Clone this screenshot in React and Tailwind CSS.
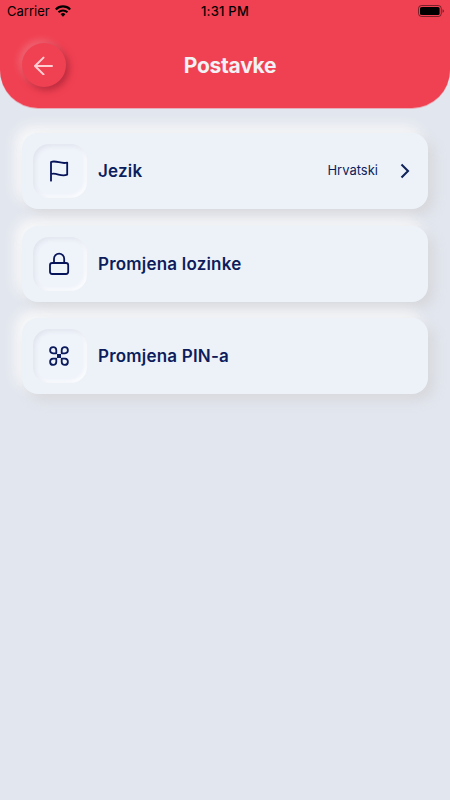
function StatusBar() {
  return (
    <div className="grid h-[23px] grid-cols-3 items-center pl-[7px] pr-[6px] text-[13px] leading-none text-black">
      <div className="flex items-center gap-[5px]">
        <span>Carrier</span>
        <svg className="-mt-px" width="16" height="12" viewBox="0 0 16 12" fill="black">
          <path d="M8 11.8 5.6 9.3a3.4 3.4 0 0 1 4.8 0z" />
          <path d="M3.5 7.3a6.4 6.4 0 0 1 9 0" fill="none" stroke="black" strokeWidth="2" />
          <path d="M.8 4.4a10.2 10.2 0 0 1 14.4 0" fill="none" stroke="black" strokeWidth="2.1" />
        </svg>
      </div>
      <span className="pr-px text-center font-medium tracking-[0.2px]">1:31 PM</span>
      <svg className="-mt-px justify-self-end" width="26" height="12" viewBox="0 0 26 12">
        <rect x="0.5" y="0.5" width="22.8" height="11" rx="3" fill="none" stroke="black" strokeOpacity="0.5" />
        <rect x="2" y="2" width="19.6" height="8" rx="1.6" fill="black" />
        <path d="M24.6 4.2c.8.3 1.2 1 1.2 1.8s-.4 1.5-1.2 1.8z" fill="black" fillOpacity="0.6" />
      </svg>
    </div>
  )
}

function Header({ title }) {
  return (
    <header className="h-[108px] rounded-b-[38px] bg-[#f04152] shadow-[0_1px_0_rgba(240,65,82,0.35)]">
      <StatusBar />
      <div className="grid grid-cols-[44px_1fr_34px] items-center px-[22px] pt-5">
        <button className="flex size-11 items-center justify-center rounded-full bg-[#f04152] shadow-[3px_3px_7px_rgba(130,20,40,0.5),-3px_-3px_7px_rgba(255,255,255,0.2)]">
          <svg width="20" height="20" viewBox="0 0 20 20" fill="none" stroke="#ffced3" strokeWidth="2" strokeLinecap="round" strokeLinejoin="round">
            <path d="M18 11H1M9.5 2.6 1 11l8.500 8.400" />
          </svg>
        </button>
        <h1 className="text-center text-[21px] font-bold leading-none tracking-[-0.25px] text-[#f3f1f4]">{title}</h1>
      </div>
    </header>
  )
}

function FlagIcon() {
  return (
    <svg width="24" height="24" viewBox="0 0 24 24" fill="none" stroke="#07145a" strokeWidth="1.8" strokeLinecap="round" strokeLinejoin="round">
      <path d="M4 21.700V3c5.500-2.200 10 2.600 16.200.6v12c-6.200 2.600-10.200-2.200-16.200-.6" />
    </svg>
  )
}

function LockIcon() {
  return (
    <svg width="24" height="24" viewBox="0 0 24 24" fill="none" stroke="#07145a" strokeWidth="1.8" strokeLinecap="round" strokeLinejoin="round">
      <rect x="3" y="11" width="18.200" height="11" rx="2.200" />
      <path d="M7 11V6.700a5.100 5.100 0 0 1 10.200 0V11" />
    </svg>
  )
}

function PinIcon() {
  return (
    <svg width="24" height="24" viewBox="0 0 24 24" fill="none" stroke="#0b1b5c" strokeWidth="1.8" strokeLinejoin="round">
      <path d="M9.300 9.300H6a3.100 3.100 0 1 1 3.300-3.300z" />
      <path d="M14.700 9.300H18a3.100 3.100 0 1 0-3.300-3.300z" />
      <path d="M9.300 14.700H6a3.100 3.100 0 1 0 3.300 3.300z" />
      <path d="M14.700 14.700H18a3.100 3.100 0 1 1-3.300 3.300z" />
      <path d="M10 10h4v4h-4z" fill="#0b1b5c" stroke="none" />
    </svg>
  )
}

const items = [
  { label: 'Jezik', icon: FlagIcon, value: 'Hrvatski' },
  { label: 'Promjena lozinke', icon: LockIcon },
  { label: 'Promjena PIN-a', icon: PinIcon },
]

function SettingsRow({ label, icon: Icon, value }) {
  return (
    <button className="flex h-[76px] w-full items-center rounded-[16px] bg-[#edf2f9] pl-[11px] pr-[18px] text-left text-[#0d1d5c] shadow-[6px_6px_12px_rgba(209,209,212,0.7),-6px_-6px_13px_rgba(250,250,250,1)]">
      <span className="flex size-[54px] shrink-0 items-center justify-center rounded-[16px] bg-[#eff3fa] pr-[2px] shadow-[inset_2px_2px_4px_rgba(215,218,228,0.6),inset_-2px_-2px_4px_rgba(255,255,255,0.8)]">
        <Icon />
      </span>
      <span className="ml-[11px] pt-px text-[17px] font-semibold leading-none tracking-[0.2px]">{label}</span>
      {value && (
        <span className="ml-auto flex items-center gap-[22px]">
          <span className="pb-[2px] text-[13px] leading-none">{value}</span>
          <svg width="10" height="16" viewBox="0 0 10 16" fill="none" stroke="#102458" strokeWidth="2.100">
            <path d="m1.500 1.500 6.500 6.500-6.500 6.500" />
          </svg>
        </span>
      )}
    </button>
  )
}

export default function App() {
  return (
    <div className="min-h-screen bg-[#e2e6ee] font-['Inter',sans-serif]">
      <Header title="Postavke" />
      <main className="flex flex-col gap-[16.5px] px-[22px] pt-[25px]">
        {items.map((item) => (
          <SettingsRow key={item.label} {...item} />
        ))}
      </main>
    </div>
  )
}
